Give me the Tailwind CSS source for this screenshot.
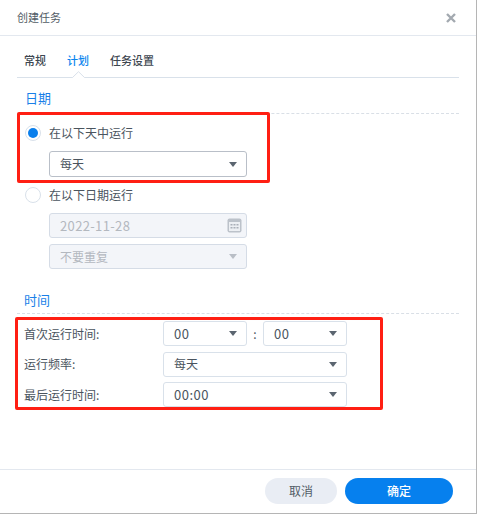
<!DOCTYPE html>
<html lang="zh">
<head>
<meta charset="utf-8">
<script src="https://cdn.jsdelivr.net/npm/@tailwindcss/browser@4"></script>
</head>
<body class="bg-white">
<div class="relative w-[477px] h-[514px] overflow-hidden font-['Noto_Sans_CJK_SC','Noto_Sans',sans-serif] text-[12px] text-[#4a545e] bg-white border-r border-b border-[#b5b5b5] flex flex-col">
  <header class="h-[36px] shrink-0 border-b border-[#e3e8ef] flex items-center justify-between pl-[17px] pr-[20px]">
    <span class="text-[11px] text-[#525c66] leading-none">创建任务</span>
    <svg class="w-[10px] h-[10px]" viewBox="0 0 10 10"><path d="M1 1 9 9M9 1 1 9" stroke="#a3a9b0" stroke-width="2.400"/></svg>
  </header>

  <main class="flex-1 px-[17px] relative">
    <nav class="relative h-[42px] flex items-center gap-[21px] pl-[7px] pt-[8px] border-b border-[#d9e1ea] font-medium text-[11px] text-[#3d4650] w-[442px]">
      <span>常规</span>
      <span class="text-[#0a84ee]">计划</span>
      <span>任务设置</span>
      <svg class="absolute left-[55px] bottom-[-1px] w-[13px] h-[7px]" viewBox="0 0 13 7"><path d="M0 6.500H.5L6.500.7 12.500 6.500H13V7H0Z" fill="#fff"/><path d="M0 6.500H.5L6.500.7 12.500 6.500H13" fill="none" stroke="#d9e1ea"/></svg>
    </nav>

    <section class="w-[442px]">
      <div class="h-[36px] flex items-end pb-[6px] pl-[8px] border-b border-dashed border-[#d9dfe6] text-[13px] leading-[18px] text-[#1a7fe8]">日期</div>
      <div class="pl-[8px]">
        <div class="h-[38px] flex items-center gap-[8px]">
          <span class="w-[16px] h-[16px] rounded-full border border-[#d9e1ea] flex items-center justify-center"><span class="w-[10px] h-[10px] rounded-full bg-[#0a7fec]"></span></span>
          <span>在以下天中运行</span>
        </div>
        <div class="ml-[24px] w-[198px] h-[26px] -mt-[1px] rounded-[3px] border border-[#b9bfc8] flex items-center justify-between pl-[10px] pr-[9px]">
          <span>每天</span>
          <svg class="w-[8px] h-[5px]" viewBox="0 0 8 5"><path d="M0 0H8L4 5Z" fill="#5b6570"/></svg>
        </div>
        <div class="h-[36px] flex items-center gap-[8px]">
          <span class="w-[16px] h-[16px] rounded-full border border-[#d9e1ea]"></span>
          <span>在以下日期运行</span>
        </div>
        <div class="ml-[24px] w-[198px] h-[25px] rounded-[3px] border border-[#d5dce6] bg-[#f3f5f9] flex items-center justify-between pl-[10px] pr-[4px] text-[13px] tracking-[0.35px] text-[#b3b8bf]">
          <span>2022-11-28</span>
          <svg class="w-[15px] h-[15px]" viewBox="0 0 15 15"><rect x="0.500" y="0.500" width="14" height="14" rx="2" fill="#bcc2ca"/><rect x="2" y="4" width="11" height="9" fill="#eceff3"/><path d="M3.500 6h2v1.500h-2zM6.500 6h2v1.500h-2zM9.500 6h2v1.500h-2zM3.500 9h2v1.500h-2zM6.500 9h2v1.500h-2zM9.500 9h2v1.500h-2z" fill="#a9afb8"/></svg>
        </div>
        <div class="ml-[24px] w-[198px] h-[25px] mt-[6px] rounded-[3px] border border-[#d5dce6] bg-[#f3f5f9] flex items-center justify-between pl-[10px] pr-[9px] text-[#b3b8bf]">
          <span>不要重复</span>
          <svg class="w-[8px] h-[5px]" viewBox="0 0 8 5"><path d="M0 0H8L4 5Z" fill="#b9bec6"/></svg>
        </div>
      </div>
    </section>

    <section class="w-[442px]">
      <div class="h-[45px] flex items-end pb-[4px] pl-[7px] border-b border-dashed border-[#d9dfe6] text-[13px] leading-[18px] text-[#1a7fe8]">时间</div>
      <div class="pl-[7px] pt-[7px] flex flex-col gap-[5.500px]">
        <div class="flex items-center h-[25px]">
          <span class="w-[139px]">首次运行时间:</span>
          <div class="w-[84px] h-[25px] rounded-[3px] border border-[#d9e1ea] flex items-center justify-between pl-[10px] pr-[9px] text-[13px] tracking-[0.5px]"><span>00</span><svg class="w-[8px] h-[5px]" viewBox="0 0 8 5"><path d="M0 0H8L4 5Z" fill="#5b6570"/></svg></div>
          <span class="w-[16px] text-center">:</span>
          <div class="w-[84px] h-[25px] rounded-[3px] border border-[#d9e1ea] flex items-center justify-between pl-[10px] pr-[9px] text-[13px] tracking-[0.5px]"><span>00</span><svg class="w-[8px] h-[5px]" viewBox="0 0 8 5"><path d="M0 0H8L4 5Z" fill="#5b6570"/></svg></div>
        </div>
        <div class="flex items-center h-[25px]">
          <span class="w-[139px]">运行频率:</span>
          <div class="w-[184px] h-[25px] rounded-[3px] border border-[#d9e1ea] flex items-center justify-between pl-[10px] pr-[9px]"><span>每天</span><svg class="w-[8px] h-[5px]" viewBox="0 0 8 5"><path d="M0 0H8L4 5Z" fill="#5b6570"/></svg></div>
        </div>
        <div class="flex items-center h-[25px]">
          <span class="w-[139px]">最后运行时间:</span>
          <div class="w-[184px] h-[25px] rounded-[3px] border border-[#d9e1ea] flex items-center justify-between pl-[10px] pr-[9px] text-[13px] tracking-[0.5px]"><span>00:00</span><svg class="w-[8px] h-[5px]" viewBox="0 0 8 5"><path d="M0 0H8L4 5Z" fill="#5b6570"/></svg></div>
        </div>
      </div>
    </section>
  </main>

  <footer class="h-[44px] shrink-0 border-t border-[#e3e8ef] flex justify-end items-start pt-[8px] pr-[23px] gap-[8px]">
    <button class="w-[72px] h-[26px] rounded-full bg-[#e9edf4] text-[#525c66] text-[12px]">取消</button>
    <button class="w-[108px] h-[26px] rounded-full bg-[#0680ee] text-white font-medium text-[12px]">确定</button>
  </footer>

  <div class="absolute left-[17px] top-[112px] w-[253px] h-[71px] border-[3px] border-[#ff1f13] rounded-[2px] pointer-events-none"></div>
  <div class="absolute left-[15px] top-[317px] w-[368px] h-[93px] border-[3px] border-[#ff1f13] rounded-[2px] pointer-events-none"></div>
</div>
</body>
</html>
